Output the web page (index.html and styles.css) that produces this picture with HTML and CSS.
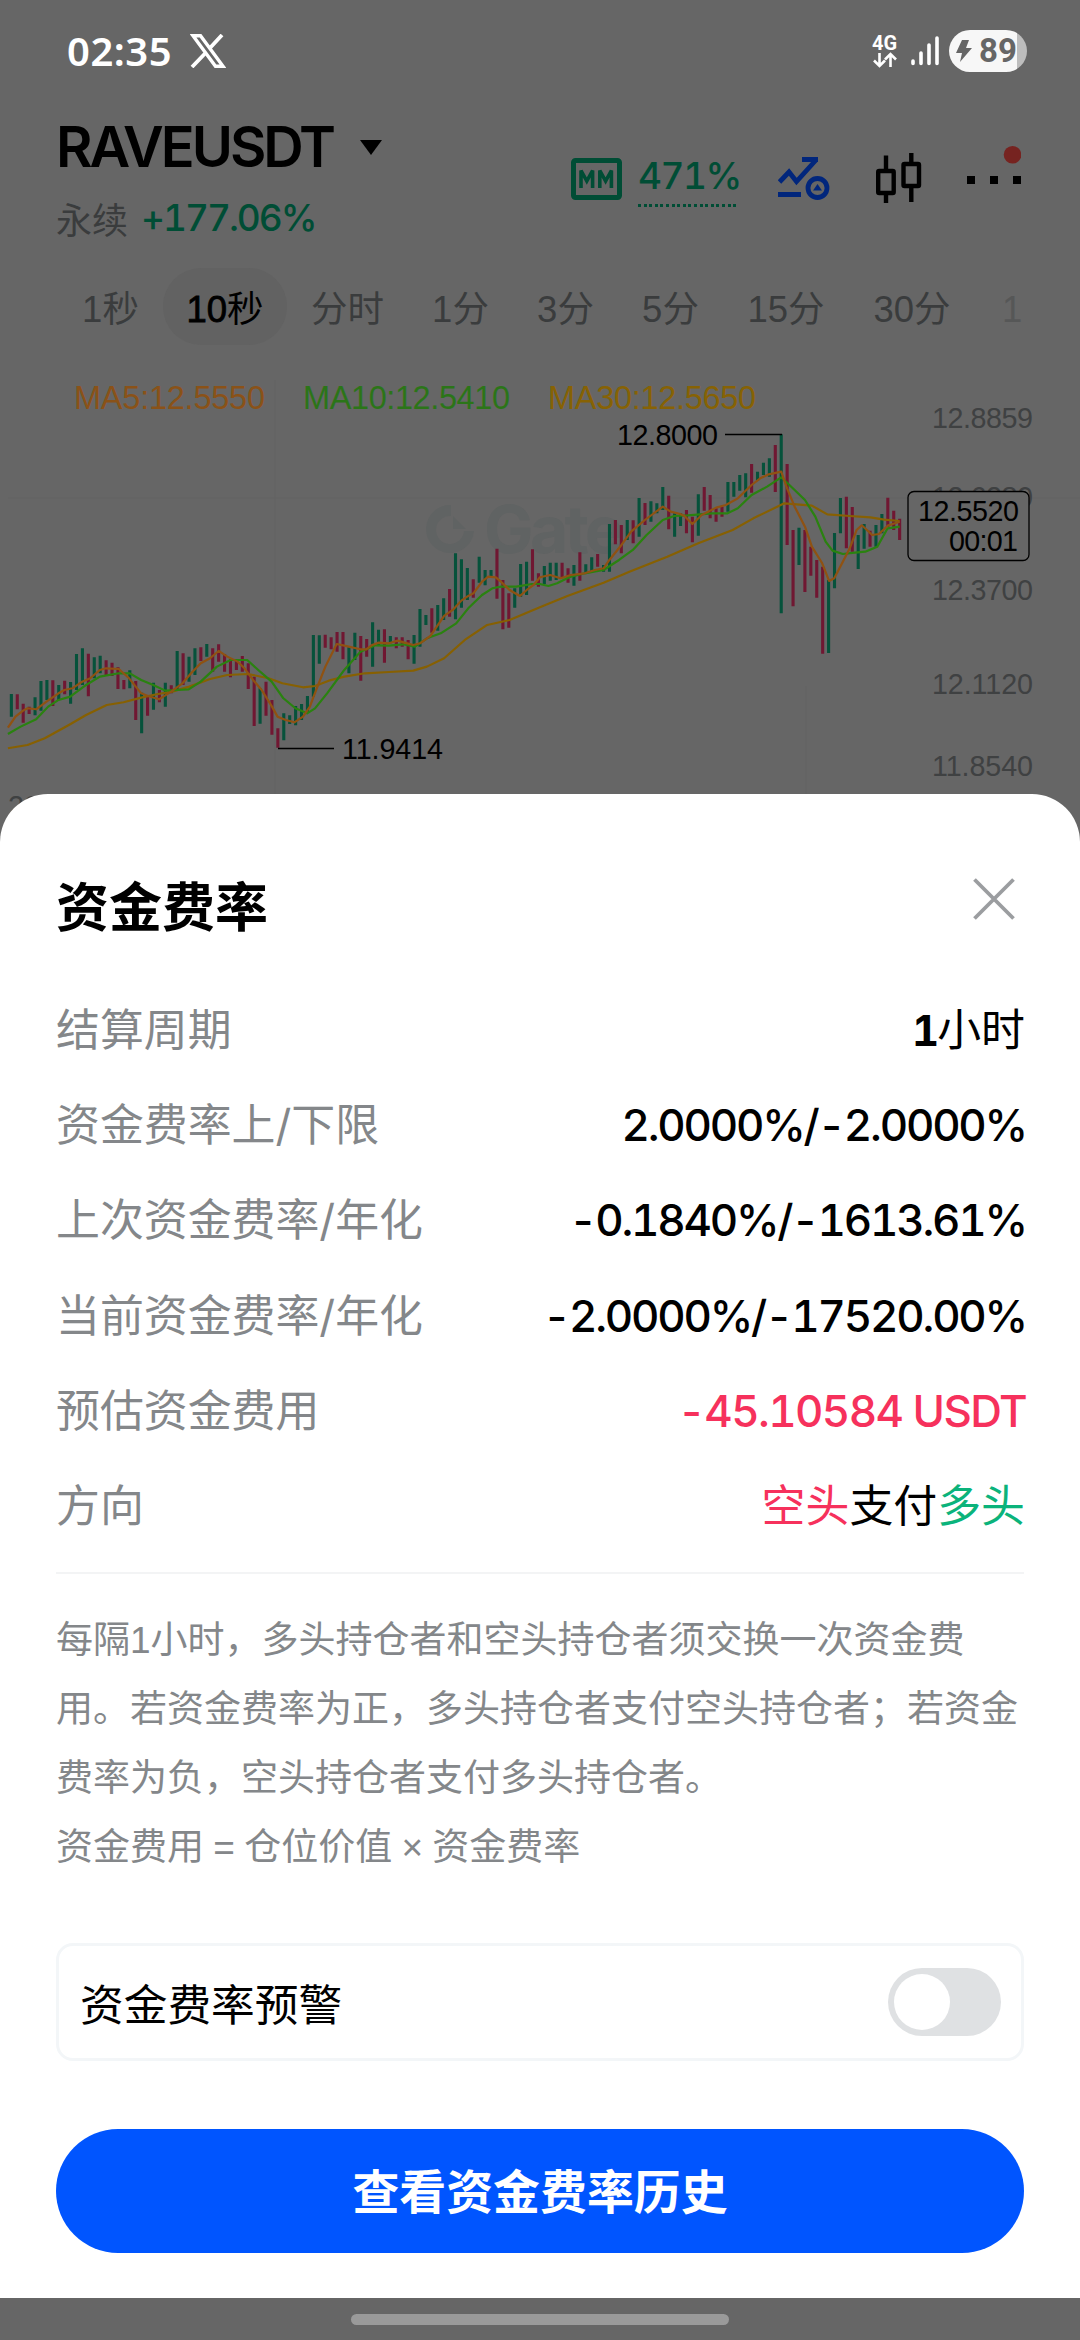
FILE: index.html
```html
<!DOCTYPE html>
<html lang="zh-CN">
<head>
<meta charset="utf-8">
<title>资金费率</title>
<link rel="stylesheet" href="styles.css">
</head>
<body>
<div class="screen">
  <header class="status">
    <span class="clock">02:35</span>
    <svg class="x-logo" width="36" height="34" viewBox="0 0 36 34"><path d="M3 1.700H10.500L33 32.300H25.500Z" fill="none" stroke="#fff" stroke-width="3.400"/><path d="M32 1L19.500 14.500M15 19.500L2 33" stroke="#fff" stroke-width="3.800"/></svg>
    <div class="status-right">
      <div class="net"><span>4G</span>
        <svg width="26" height="16" viewBox="0 0 26 16" fill="none" stroke="#fff" stroke-width="2.600"><path d="M7.500 1V14M2 8.500L7.500 14L13 8.500M18.500 15V2M13 7.500L18.500 2L24 7.500"/></svg>
      </div>
      <svg class="signal" width="28" height="30" viewBox="0 0 28 30" stroke="#fff" stroke-width="3.600" stroke-linecap="round"><path d="M2 25V27.500M10 17V27.500M18 9V27.500M26 2V27.500"/></svg>
      <div class="battery">
        <svg width="16" height="22" viewBox="0 0 16 22"><path d="M6 0H13L10 8H16L4 22L6 13H0Z" fill="#666"/></svg><span>89</span>
      </div>
    </div>
  </header>

  <section class="pair">
    <div class="pair-info">
      <div class="pair-name"><h1>RAVEUSDT</h1><svg width="22" height="15" viewBox="0 0 22 15"><path d="M0 0H22L11 15Z"/></svg></div>
      <div class="pair-sub"><span class="perp">永续</span><span class="change">+177.06%</span></div>
    </div>
    <div class="tools">
      <svg class="mm" width="51" height="42" viewBox="0 0 51 42" fill="none" stroke="#004d35"><rect x="2.500" y="2.500" width="46" height="37" rx="2" stroke-width="5"/><path d="M10 30V12.500L15.800 23L21.600 12.500V30M28.800 30V12.500L34.600 23L40.400 12.500V30" stroke-width="3.600"/></svg>
      <span class="mm-rate">471%</span>
      <svg class="trend" width="52" height="43" viewBox="0 0 52 43" fill="none" stroke="#01267c" stroke-width="4.800"><path d="M1.500 25L11 15L18.500 24.500L38 3M24 2.500H40M0 37.500H23"/><circle cx="39.500" cy="31" r="9.500"/><path d="M39.500 27L44 33.500H35Z" fill="#01267c" stroke="none"/></svg>
      <svg class="kline" width="46" height="50" viewBox="0 0 46 50" fill="none" stroke="#000" stroke-width="4.400"><rect x="2.200" y="18" width="15.500" height="22" rx="1"/><rect x="27.500" y="11" width="15.500" height="22" rx="1"/><path d="M10 2.500V18M10 40V51M35.300 0V11M35.300 33V49"/></svg>
      <svg class="more" width="54" height="40" viewBox="0 0 54 40"><path d="M0 30h8v8h-8zM23 30h8v8h-8zM46 30h8v8h-8z"/><circle cx="45.500" cy="8.800" r="8.800" fill="#762320"/></svg>
    </div>
  </section>

  <nav class="tabs">
    <span class="w1">1秒</span><span class="w2 active"><b>10</b>秒</span><span class="w0">分时</span><span class="w1">1分</span><span class="w1">3分</span><span class="w1">5分</span><span class="w2">15分</span><span class="w2">30分</span><span class="faded">1</span>
  </nav>

  <svg class="chart" width="1080" height="500" viewBox="0 360 1080 500">
    <path d="M8 498H1080M275 380V794M806 686V794" stroke="#636363" stroke-width="1"/>
    <g class="watermark">
      <path d="M451 505A24 24 0 1 0 474 531H464A14 14 0 1 1 451 516Z"/><path d="M453 516L466 529H453Z"/>
      <text x="484" y="553" textLength="140">Gate</text>
    </g>
    <g class="ma-label">
      <text x="74" y="409" textLength="191" fill="#8a5218">MA5:12.5550</text>
      <text x="303" y="409" textLength="207" fill="#2b7518">MA10:12.5410</text>
      <text x="548" y="409" textLength="208" fill="#876204">MA30:12.5650</text>
    </g>
    <g class="axis">
      <text x="932" y="428" textLength="101">12.8859</text>
      <text x="932" y="507" textLength="101">12.6280</text>
      <text x="932" y="600" textLength="101">12.3700</text>
      <text x="932" y="694" textLength="101">12.1120</text>
      <text x="932" y="776" textLength="101">11.8540</text>
      <text x="8" y="816">20:20</text>
    </g>
    <g transform="translate(0 360) scale(.3443 .3333)" fill="none">
      <g id="candles" stroke-width="9"></g>
      <g stroke-width="6.500" stroke-linejoin="round">
        <path stroke="#876002" d="M23 1165L80 1155L130 1135L200 1095L250 1065L310 1035L359 1027L410 1013L455 1003L500 995L550 980L610 957L660 945L720 942L780 955L820 970L880 982L915 978L955 962L1000 950L1060 940L1130 936L1200 932L1240 920L1290 895L1350 840L1415 795L1480 780L1568 742L1648 708L1753 668L1828 635L1938 590L2028 550L2128 510L2188 475L2278 430L2358 437L2403 463L2468 468L2528 472L2568 479L2613 483"/>
        <path stroke="#2a8210" d="M23 1122L60 1100L105 1078L140 1040L170 1020L204 1010L250 975L290 950L345 940L377 940L410 960L445 975L480 992L515 990L548 988L583 965L630 920L670 900L718 900L750 930L789 965L823 1015L858 1045L892 1060L915 1045L950 1000L1000 930L1047 875L1090 856L1130 857L1170 853L1205 860L1240 835L1280 820L1325 790L1360 745L1400 705L1430 685L1455 680L1500 680L1545 672L1568 672L1593 678L1618 670L1653 652L1698 640L1753 630L1798 600L1838 570L1878 525L1925 480L1958 468L1998 466L2068 460L2113 460L2143 445L2183 405L2228 380L2269 352L2308 390L2338 420L2368 470L2398 545L2418 572L2448 582L2483 578L2513 575L2548 560L2578 505L2613 500"/>
        <path stroke="#8f5212" d="M23 1103L45 1070L67 1052L80 1045L105 1048L135 1025L170 1000L187 990L210 985L239 965L262 955L290 930L308 925L345 927L375 955L410 1000L430 1008L462 1018L497 995L530 970L555 940L583 910L610 895L635 873L660 890L690 905L710 925L735 960L760 990L790 1040L806 1070L830 1080L855 1087L880 1070L900 1040L920 985L945 920L978 852L1000 857L1047 868L1064 868L1081 855L1100 848L1130 850L1155 842L1175 848L1200 855L1220 850L1250 828L1290 768L1315 750L1340 722L1360 708L1375 700L1400 665L1418 650L1440 652L1455 665L1480 690L1510 708L1530 690L1550 675L1568 652L1598 645L1628 655L1658 645L1698 640L1728 630L1753 625L1770 600L1805 555L1833 515L1873 480L1925 440L1948 455L1976 462L1988 468L2011 492L2038 465L2080 443L2108 435L2143 415L2183 375L2208 355L2233 343L2269 335L2286 385L2308 440L2338 500L2358 560L2388 610L2408 663L2423 655L2448 605L2468 565L2488 510L2503 496L2518 510L2533 525L2553 522L2578 497L2593 492L2613 485"/>
      </g>
    </g>
    <g class="marks">
      <path d="M725 434.500H782M278 748.500H334" stroke="#000" stroke-width="1.300"/>
      <text x="617" y="445" textLength="101">12.8000</text>
      <text x="342" y="759" textLength="101">11.9414</text>
      <rect x="908" y="491.500" width="121" height="69" rx="6" fill="#666" stroke="#000" stroke-width="1.300"/>
      <text x="918" y="521" textLength="101">12.5520</text>
      <text x="949" y="551" textLength="69">00:01</text>
    </g>
  </svg>

  <main class="sheet">
    <div class="sheet-head"><h2>资金费率</h2>
      <svg width="42" height="42" viewBox="0 0 42 42"><path d="M1.500 1.500L40.500 40.500M40.500 1.500L1.500 40.500" stroke="#9b9da0" stroke-width="3.800"/></svg>
    </div>
    <dl class="rows">
      <div><dt>结算周期</dt><dd class="cjk"><b>1</b>小时</dd></div>
      <div><dt>资金费率上/下限</dt><dd>2.0000%/-2.0000%</dd></div>
      <div><dt>上次资金费率/年化</dt><dd>-0.1840%/-1613.61%</dd></div>
      <div><dt>当前资金费率/年化</dt><dd>-2.0000%/-17520.00%</dd></div>
      <div><dt>预估资金费用</dt><dd class="down fee">-45.10584 USDT</dd></div>
      <div><dt>方向</dt><dd class="cjk"><span class="down">空头</span>支付<span class="up">多头</span></dd></div>
    </dl>
    <p class="note">每隔1小时，多头持仓者和空头持仓者须交换一次资金费用。若资金费率为正，多头持仓者支付空头持仓者；若资金费率为负，空头持仓者支付多头持仓者。<br>资金费用 = 仓位价值 × 资金费率</p>
    <div class="alert"><span>资金费率预警</span><span class="toggle"><i></i></span></div>
    <button class="cta">查看资金费率历史</button>
  </main>
  <footer class="home"><i></i></footer>
</div>
<script src="chart.js"></script>
</body>
</html>
```
FILE: styles.css
```css
* { box-sizing: border-box; margin: 0; padding: 0; }
body { background: #666; font-family: Inter, "Noto Sans CJK SC", sans-serif; font-variant-numeric: tabular-nums; color: #000; }
svg { display: block; flex: none; }
.screen { width: 1080px; height: 2340px; overflow: hidden; display: flex; flex-direction: column; background: #666; }

.status { height: 102px; flex: none; padding: 0 53px 0 67px; display: flex; align-items: center; color: #fff; }
.clock { font: 600 40px/48px "Noto Sans", sans-serif; letter-spacing: .5px; }
.x-logo { margin-left: 18px; }
.status-right { margin-left: auto; display: flex; align-items: center; }
.net { width: 26px; height: 34px; }
.net span { display: block; font: 700 20px/18px Roboto, sans-serif; }
.signal { margin: 0 10px 0 13px; }
.battery { width: 78px; height: 42px; border-radius: 21px; display: flex; align-items: center; gap: 7px; padding-left: 7px; background: linear-gradient(90deg, #f7f7f7 68px, #bdbdbd 68px); color: #666; }
.battery span { font: 700 33px/42px Roboto, sans-serif; }

.pair { height: 160px; flex: none; padding: 0 59px 0 56px; display: flex; justify-content: space-between; }
.pair-name { height: 90px; display: flex; align-items: center; gap: 27px; }
.pair-name h1 { font-weight: 600; font-size: 56px; line-height: 90px; letter-spacing: -3px; }
.pair-sub { display: flex; gap: 13px; height: 56px; line-height: 58px; }
.perp { font-size: 36px; color: #3a3c3d; }
.change { font-size: 37px; line-height: 51px; font-weight: 500; letter-spacing: -2px; color: #004d35; }
.tools { display: flex; align-items: flex-start; }
.mm { margin-top: 56px; }
.mm-rate { margin: 51px 40px 0 16px; width: 100px; height: 54px; line-height: 46px; font-size: 37px; font-weight: 500; letter-spacing: -1.500px; color: #004d35; background: repeating-linear-gradient(90deg, #004d35 0 3px, transparent 3px 5.600px) 0 100% / 98px 3px no-repeat; }
.trend { margin-top: 55px; }
.kline { margin: 51px 45px 0 46px; }
.more { margin-top: 44px; }

.tabs { height: 98px; flex: none; width: 1020px; padding: 6px 0 15px 58px; display: flex; font-family: "Liberation Sans", "Noto Sans CJK SC", sans-serif; font-size: 36.500px; line-height: 83px; color: #3a3c3d; white-space: nowrap; }
.tabs span { height: 77px; flex: none; text-align: center; }
.tabs .w0 { width: 121px; }
.tabs .w1 { width: 105px; }
.tabs .w2 { width: 126px; }
.tabs .active { background: #626262; border-radius: 38px; color: #000; width: 124px; }
.tabs b { font-weight: 400; -webkit-text-stroke: .8px #000; }
.tabs .faded { opacity: .35; padding-left: 27px; }

.chart { margin-bottom: -66px; }
.chart text { font-family: "Liberation Sans", sans-serif; }
.ma-label { font-size: 32.500px; }
.axis { font-size: 28.700px; fill: #3f4142; }
.marks { font-size: 28.700px; }
.watermark { fill: #606363; }
.chart .watermark text { font-family: Inter, sans-serif; font-size: 66px; font-weight: 700; }

.sheet { position: relative; height: 1504px; flex: none; background: #fff; border-radius: 48px 48px 0 0; padding: 0 56px; }
.sheet-head { display: flex; justify-content: space-between; align-items: flex-start; padding: 74px 9px 0 0; height: 189px; }
.sheet-head h2 { font-size: 53px; line-height: 80px; font-weight: 700; }
.sheet-head svg { margin-top: 10px; }
.rows { height: 591px; border-bottom: 2px solid #f3f4f5; }
.rows div { height: 95.200px; display: flex; justify-content: space-between; line-height: 95px; font-size: 43.900px; }
.rows dt { color: #84878a; }
.rows dd { font-weight: 500; letter-spacing: -2.200px; margin-right: -2px; }
.rows .fee { letter-spacing: -1.600px; }
.rows .cjk { font-weight: 400; letter-spacing: 0; margin-right: -1px; }
.rows .cjk b { font-size: 42px; letter-spacing: -2px; }
.rows .down { color: #f6315c; }
.rows .up { color: #0bb37b; }
.note { margin-top: 32px; font-family: "Liberation Sans", "Noto Sans CJK SC", sans-serif; font-size: 37px; line-height: 69px; word-spacing: -1px; color: #84878a; }
.alert { margin-top: 61px; height: 118px; border: 3px solid #f3f6f8; border-radius: 17px; padding: 0 20px 0 21px; display: flex; align-items: center; justify-content: space-between; font-size: 43.700px; }
.toggle { width: 113px; height: 68px; border-radius: 34px; background: #dfe1e3; padding: 6px; }
.toggle i { display: block; width: 56px; height: 56px; border-radius: 50%; background: #fff; }
.cta { display: block; margin-top: 68px; width: 968px; height: 124px; padding-bottom: 4px; border: 0; border-radius: 62px; background: #0055ff; color: #fff; font: 700 46.900px/120px "Noto Sans CJK SC", sans-serif; }

.home { height: 42px; display: flex; justify-content: center; align-items: center; }
.home i { width: 378px; height: 11px; border-radius: 6px; background: #9a9a9a; }
```
FILE: chart.js
```js
// Candle ranges: top, bottom, colour (g = up, r = down)
const ranges = `1002 1070 g,1003 1048 r,1031 1088 r,1040 1062 r,1012 1066 g,963 1052 g,960 1020 g,961 1038 r,975 1020 g,962 1003 r,966 1031 g,882 990 g,865 975 g,881 1009 r,892 955 g,887 940 g,901 948 r,908 948 r,922 987 r,960 988 r,931 985 g,963 1080 r,998 1120 g,1005 1067 r,968 1049 g,990 1027 r,968 1040 g,976 1000 r,873 990 g,880 975 r,890 965 g,865 945 g,862 903 r,852 890 g,865 935 r,853 905 r,882 935 r,898 952 r,903 930 r,888 935 r,910 987 r,950 1098 r,985 1091 g,965 1067 r,1020 1124 r,1105 1163 r,1060 1141 g,1066 1092 g,1038 1096 g,1032 1080 g,1008 1055 g,825 1010 g,826 911 g,824 863 r,832 868 r,816 875 r,816 898 r,862 940 g,818 900 g,828 962 r,837 890 r,787 920 g,809 855 g,808 908 r,828 850 g,832 865 r,832 860 r,840 898 r,825 911 g,747 860 g,765 795 g,745 818 r,735 812 g,715 780 g,687 770 r,580 778 g,598 743 g,624 720 g,658 713 r,590 668 g,630 676 g,630 650 g,566 716 r,660 808 r,700 803 r,685 743 g,612 710 g,605 705 g,568 662 r,640 680 r,618 672 g,608 662 g,608 660 g,608 655 r,625 668 r,615 677 g,577 662 r,613 640 g,592 635 g,582 620 r,615 635 g,492 635 g,480 553 r,495 580 r,480 540 g,481 550 r,414 530 g,429 495 r,424 485 g,430 460 g,381 450 g,407 508 r,460 530 g,460 498 g,450 520 r,470 547 r,403 527 g,381 452 r,405 475 r,445 485 r,440 470 r,366 455 g,366 410 g,345 392 g,340 412 g,312 398 r,335 362 g,308 345 g,295 350 g,255 396 r,223 760 g,312 555 r,510 739 r,503 615 g,510 696 r,560 647 r,600 713 r,620 881 r,660 879 g,519 685 g,414 520 g,410 565 r,441 575 r,525 627 g,492 566 g,512 560 r,495 560 g,462 520 g,413 500 r,452 510 r,476 540 r`;
const paths = { g: "", r: "" };
ranges.split(",").forEach((row, i) => {
  const [top, bottom, side] = row.split(" ");
  paths[side] += `M${(33 + 17.2 * i).toFixed(1)} ${top}V${bottom}`;
});
document.getElementById("candles").innerHTML =
  `<path d="${paths.g}" stroke="#06523b"/><path d="${paths.r}" stroke="#701732"/>`;
```
